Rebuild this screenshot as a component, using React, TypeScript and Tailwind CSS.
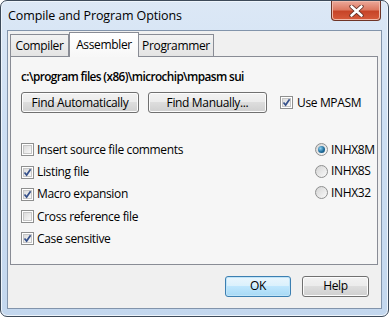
import React from 'react';

const font = { fontFamily: '"Open Sans", "Noto Sans", sans-serif' };

function CheckBox({ checked }: { checked: boolean }) {
  return (
    <span className="w-[13px] h-[13px] shrink-0 border border-[#8e8f8f] bg-white p-[1px] flex">
      <span className="flex-1 border border-[#c6c6c6] bg-gradient-to-br from-[#dcdcdc] to-[#f8f8f8] relative">
        {checked && (
          <svg viewBox="0 0 9 9" className="absolute inset-[-1px] w-[9px] h-[9px]">
            <path d="M1.5 4.5 L3.6 7 L7.6 1.2" fill="none" stroke="#35508a" strokeWidth="1.7" />
          </svg>
        )}
      </span>
    </span>
  );
}

function Radio({ checked }: { checked: boolean }) {
  return (
    <span className="w-[13px] h-[13px] shrink-0 rounded-full border border-[#8e8f8f] bg-gradient-to-br from-[#d4d4d4] to-[#fafafa] flex items-center justify-center">
      {checked && (
        <span className="w-[7px] h-[7px] rounded-full bg-[radial-gradient(circle_at_35%_35%,#8fd0f0_0%,#1f6d9c_55%,#0b3f63_100%)]" />
      )}
    </span>
  );
}

function Button({ children, w, primary }: { children: React.ReactNode; w: string; primary?: boolean }) {
  return (
    <div
      className={`${w} h-[21px] rounded-[3px] border flex items-center justify-center text-[12px] text-black ${
        primary
          ? 'border-[#3c7fb1] bg-[linear-gradient(#eaf6fd_0%,#d9f0fc_50%,#bee6fd_50%,#a7d9f5_100%)] shadow-[inset_0_0_0_1px_#c0e4f8]'
          : 'border-[#707070] bg-[linear-gradient(#f2f2f2_0%,#ebebeb_50%,#dddddd_50%,#cfcfcf_100%)] shadow-[inset_0_0_0_1px_#fcfcfc]'
      }`}
    >
      {children}
    </div>
  );
}

const options = [
  { label: 'Insert source file comments', checked: false },
  { label: 'Listing file', checked: true },
  { label: 'Macro expansion', checked: true },
  { label: 'Cross reference file', checked: false },
  { label: 'Case sensitive', checked: true },
];

const formats = [
  { label: 'INHX8M', checked: true },
  { label: 'INHX8S', checked: false },
  { label: 'INHX32', checked: false },
];

export default function App() {
  return (
    <div className="w-[389px] h-[317px] bg-white tracking-[-0.35px]" style={font}>
      <div className="w-full h-full rounded-[7px] border border-[#3d4a5a] bg-[linear-gradient(#dce8f6_0%,#cddff3_40%,#c3d7ee_100%)] shadow-[inset_0_0_0_1px_#eef5fc] flex flex-col">
        <div className="h-[29px] flex items-start justify-between">
          <span className="pl-[7px] pt-[9px] text-[12.5px] text-black leading-none tracking-[-0.1px]">Compile and Program Options</span>
          <div className="mr-[7px] w-[50px] h-[20px] rounded-b-[4px] border border-t-0 border-[#6e3426] bg-[linear-gradient(#eba99a_0%,#dd7a63_45%,#c74528_55%,#d65b3c_100%)] shadow-[inset_0_0_0_1px_#f1b9a9] flex items-center justify-center">
            <svg viewBox="0 0 14 12" className="w-[15px] h-[12px]">
              <path d="M2 1.5 L12 10.5 M12 1.5 L2 10.5" stroke="#5a2a20" strokeWidth="4.2" strokeLinecap="round" />
              <path d="M2 1.5 L12 10.5 M12 1.5 L2 10.5" stroke="#ffffff" strokeWidth="2.6" strokeLinecap="round" />
            </svg>
          </div>
        </div>

        <div className="mx-[6px] mb-[7px] flex-1 border border-[#8294ab] bg-[#f0f0f0] flex flex-col">
          <div className="px-[2px] pt-[1px] h-[25px] flex items-end text-[12px] text-black">
            <div className="w-[59px] h-[22px] border border-b-0 border-[#898c95] bg-[linear-gradient(#f2f2f2,#e4e4e4)] flex items-center justify-center">Compiler</div>
            <div className="w-[70px] h-[25px] -mb-[1px] border border-b-0 border-[#898c95] bg-[linear-gradient(#ffffff,#f7f7f7)] flex items-center justify-center relative z-10">Assembler</div>
            <div className="w-[75px] h-[22px] border border-b-0 border-l-0 border-[#898c95] bg-[linear-gradient(#f2f2f2,#e4e4e4)] flex items-center justify-center">Programmer</div>
          </div>

          <div className="ml-[2px] mr-[3px] h-[209px] border border-[#898c95] bg-[#f6f6f6] pl-[10px] pt-[11px] text-[12px] text-black">
            <div className="font-semibold text-[11.8px] leading-[16px] tracking-[-0.6px]">c:\program files (x86)\microchip\mpasm sui</div>
            <div className="mt-[8px] flex items-center">
              <Button w="w-[118px]">Find Automatically</Button>
              <div className="ml-[9px]">
                <Button w="w-[119px]">Find Manually...</Button>
              </div>
              <div className="ml-[13px] flex items-center gap-[4px]">
                <CheckBox checked />
                <span>Use MPASM</span>
              </div>
            </div>

            <div className="mt-[28px] grid grid-cols-[294px_1fr]">
              <div className="flex flex-col gap-[4.75px]">
                {options.map(o => (
                  <div key={o.label} className="h-[17.5px] flex items-center gap-[3px]">
                    <CheckBox checked={o.checked} />
                    <span>{o.label}</span>
                  </div>
                ))}
              </div>
              <div className="flex flex-col gap-[4px]">
                {formats.map(f => (
                  <div key={f.label} className="h-[17.5px] flex items-center gap-[3px]">
                    <Radio checked={f.checked} />
                    <span>{f.label}</span>
                  </div>
                ))}
              </div>
            </div>
          </div>

          <div className="flex-1 flex items-center justify-end gap-[11px] pr-[12px] pb-[1px]">
            <Button w="w-[66px]" primary>OK</Button>
            <Button w="w-[67px]">Help</Button>
          </div>
        </div>
      </div>
    </div>
  );
}
